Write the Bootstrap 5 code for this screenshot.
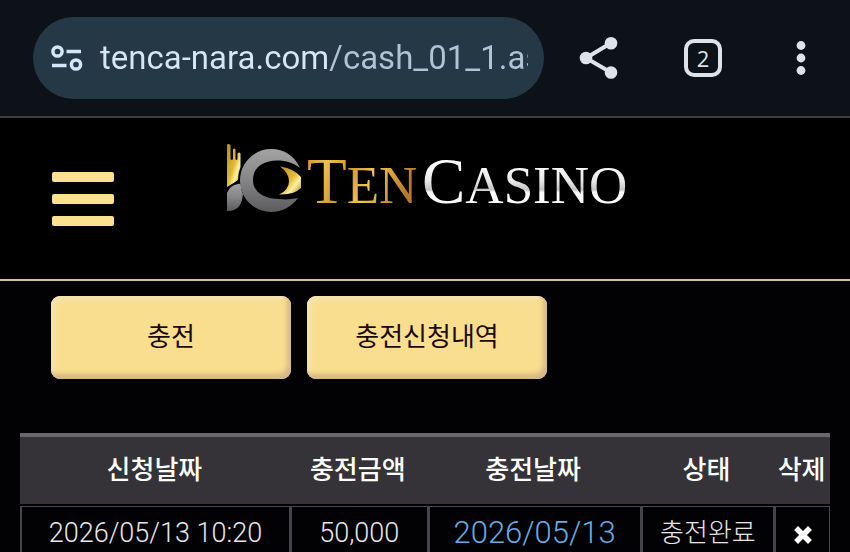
<!DOCTYPE html>
<html lang="ko">
<head>
<meta charset="utf-8">
<meta name="viewport" content="width=device-width, initial-scale=1">
<title>Ten Casino</title>
<link href="https://cdn.jsdelivr.net/npm/bootstrap@5.3.0/dist/css/bootstrap.min.css" rel="stylesheet">
<style>
  body { background: #020104; color: #e8e6e8; font-family: Roboto, "Noto Sans CJK KR", sans-serif; font-size: 26px; }
  .browser-bar { background: #0d1219; border-bottom: 2px solid #3b3f45; padding: 17px 35px 17px 33px; gap: 35px; }
  .address { flex: 1 1 0; min-width: 0; height: 82px; padding: 0 16px 0 17px; background: #243846; }
  .tools { gap: 65px; }
  .url-field { color: transparent; border: 0; outline: 0; font-family: Roboto, sans-serif; font-size: 33px; line-height: 40px; min-width: 0;
    background: linear-gradient(90deg, #d6e6f3 230px, #b0c5d4 230px); -webkit-background-clip: text; background-clip: text; }
  .icon-btn { color: #dfe3e9; line-height: 0; }
  .tab-count { width: 38px; height: 38px; border: 4px solid #dfe3e9; border-radius: 10px; font-family: "Open Sans", sans-serif; font-size: 22px; line-height: 28px; color: #dfe3e9; }
  .site-head { display: grid; grid-template-columns: 1fr auto 1fr; height: 163px; padding: 0 52px; background: #000; border-bottom: 2px solid #d9c38f; }
  .menu-btn { width: 62px; gap: 12px; }
  .menu-btn span { height: 10px; border-radius: 2px; background: #fbe08f; }
  .brand { margin-bottom: 32px; line-height: 0; }
  .actions { padding: 15px 51px 0; margin-bottom: 54px; }
  .gold-btn { width: 240px; height: 83px; padding: 0 0 6px; border: 0; border-radius: 9px; background: #fade90; color: #1c0a08; font-family: "Noto Sans CJK KR", sans-serif; font-size: 26px;
    box-shadow: inset -4px -5px 5px #d4b981, inset 3px 3px 4px #f4e4b8; }
  .history { margin: 0 20px; }
  .log-table { table-layout: fixed; width: 100%; border-collapse: separate; border-spacing: 0; text-align: center; white-space: nowrap; }
  .log-table th { height: 73px; padding: 0 0 6px; background: #353337; border-top: 4px solid #6a676c; border-bottom: 2px solid #020104; color: #fff; font-family: "Noto Sans CJK KR", sans-serif; font-weight: 500; line-height: 38px; }
  .log-table td { height: 56px; padding: 0 0 4px; border-top: 1px solid #4c4a4e; border-left: 3px solid #464448; font-weight: 300; line-height: 38px; }
  .log-table td:first-child { border-left-width: 2px; }
  .log-table td:last-child { border-right: 1px solid #4c4a4e; }
  .c-req { width: 33.2%; } .c-amt { width: 17%; } .c-done { width: 26.3%; } .c-state { width: 16.5%; }
  .log-table .figure-text { font-size: 27px; }
  .log-table .paid-on { color: #67abe0; font-size: 31px; }
</style>
<script src="https://cdn.jsdelivr.net/npm/bootstrap@5.3.0/dist/js/bootstrap.bundle.min.js"></script>
</head>
<body class="vh-100 overflow-hidden">
<div class="browser-bar d-flex align-items-center">
  <div class="address d-flex align-items-center rounded-pill">
    <button class="btn p-0 border-0 icon-btn me-3" type="button" aria-label="Site information">
      <svg width="34" height="28" viewBox="0 0 34 28" fill="none" stroke="#d3e7f6" stroke-width="3.500">
        <circle cx="7.5" cy="7.5" r="4.6"/><path d="M16.5 7.5H31M2 21.5H16.500"/><circle cx="26" cy="20.500" r="4.600"/>
      </svg>
    </button>
    <input class="url-field flex-grow-1 p-0" type="text" aria-label="Address" value="tenca-nara.com/cash_01_1.asp">
  </div>
  <div class="tools d-flex align-items-center">
    <button class="btn p-0 border-0 icon-btn" type="button" aria-label="Share">
      <svg width="40" height="44" viewBox="0 0 40 44" fill="currentColor">
        <path d="M32 7 7 22l25 14.500" fill="none" stroke="currentColor" stroke-width="4"/>
        <circle cx="7" cy="22" r="6.300"/><circle cx="32" cy="7.200" r="6.300"/><circle cx="32" cy="36.500" r="6.300"/>
      </svg>
    </button>
    <button class="btn p-0 tab-count" type="button" aria-label="Open tabs: 2">2</button>
    <button class="btn p-0 border-0 icon-btn" type="button" aria-label="More">
      <svg width="28" height="36" viewBox="0 0 28 36" fill="currentColor"><circle cx="14" cy="5.500" r="4.400"/><circle cx="14" cy="18" r="4.400"/><circle cx="14" cy="30.500" r="4.400"/></svg>
    </button>
  </div>
</div>

<header class="site-head align-items-center">
  <button class="menu-btn btn p-0 border-0 d-flex flex-column" type="button" aria-label="Menu"><span></span><span></span><span></span></button>
  <a class="brand" href="#" aria-label="Ten Casino">
    <svg width="406" height="80" viewBox="-4 0 406 80">
      <defs>
        <linearGradient id="gold" x1="0" y1="0" x2="1" y2="0.300"><stop offset="0" stop-color="#c98a35"/><stop offset=".22" stop-color="#f0bf4d"/><stop offset=".45" stop-color="#d09535"/><stop offset=".66" stop-color="#f3c653"/><stop offset="1" stop-color="#b9782a"/></linearGradient>
        <linearGradient id="silver" x1="0" y1="0" x2="0" y2="1"><stop offset=".25" stop-color="#fff"/><stop offset=".5" stop-color="#e8e8e8"/><stop offset=".62" stop-color="#c4c4c4"/><stop offset=".66" stop-color="#fff"/></linearGradient>
        <linearGradient id="steel" x1="0" y1="0" x2="0" y2="1"><stop offset="0" stop-color="#a3a3a3"/><stop offset=".5" stop-color="#858587"/><stop offset="1" stop-color="#5b5b5e"/></linearGradient>
        <linearGradient id="flame" x1="0" y1="0" x2="1" y2="1"><stop offset="0" stop-color="#b88a22"/><stop offset=".5" stop-color="#e5b936"/><stop offset=".7" stop-color="#fff2a0"/><stop offset="1" stop-color="#a87a1d"/></linearGradient>
      </defs>
      <path d="M1 1.500Q2.800.500 4.500 2V16Q5.800 18 7 16V6.500Q8.200 4.500 9.500 6.500V16Q10.500 18 11.500 16V10.500Q13 8.500 14.500 10.500V24Q12 30 12 37 8 40 1 44Z" fill="url(#flame)"/>
      <path d="M1 68V50Q4 42 12 41q2-1 3 1 0 6 2 9-1 13-9 16-3 1-7 1Z" fill="url(#steel)"/>
      <path d="M74 25C69 13 58 6 45 6 28 6 14 20 14 37.500S28 69 45 69c12 0 21-6 27-14-6 1-12 2-18 1C39 56 27 50 27 37S37 18 51 17.500c9 0 17 2.500 23 7.500Z" fill="url(#steel)"/>
      <path d="M54 23.500Q69 26 75 34v11Q68 52 53 51.500 63 47 63 38 63 30 54 23.500Z" fill="url(#flame)"/>
      <g font-family="Liberation Serif, serif" font-size="53">
        <text x="81" y="60" fill="url(#gold)"><tspan font-size="65">T</tspan>EN</text>
        <text x="196" y="60" fill="url(#silver)"><tspan font-size="65">C</tspan>ASINO</text>
      </g>
    </svg>
  </a>
</header>

<main>
  <div class="actions d-flex gap-3">
    <button class="gold-btn" type="button">충전</button>
    <button class="gold-btn" type="button">충전신청내역</button>
  </div>
  <div class="history">
    <table class="log-table">
      <colgroup><col class="c-req"><col class="c-amt"><col class="c-done"><col class="c-state"><col></colgroup>
      <thead><tr><th scope="col">신청날짜</th><th scope="col">충전금액</th><th scope="col">충전날짜</th><th scope="col">상태</th><th scope="col">삭제</th></tr></thead>
      <tbody><tr>
        <td class="figure-text">2026/05/13 10:20</td><td class="figure-text">50,000</td><td class="paid-on">2026/05/13</td><td>충전완료</td>
        <td><button class="btn p-0 border-0 icon-btn" type="button" aria-label="삭제"><svg width="18" height="18" viewBox="0 0 18 18"><path d="M4 4l10 10M14 4 4 14" stroke="#fff" stroke-width="5.500" stroke-linecap="square"/></svg></button></td>
      </tr></tbody>
    </table>
  </div>
</main>
</body>
</html>
